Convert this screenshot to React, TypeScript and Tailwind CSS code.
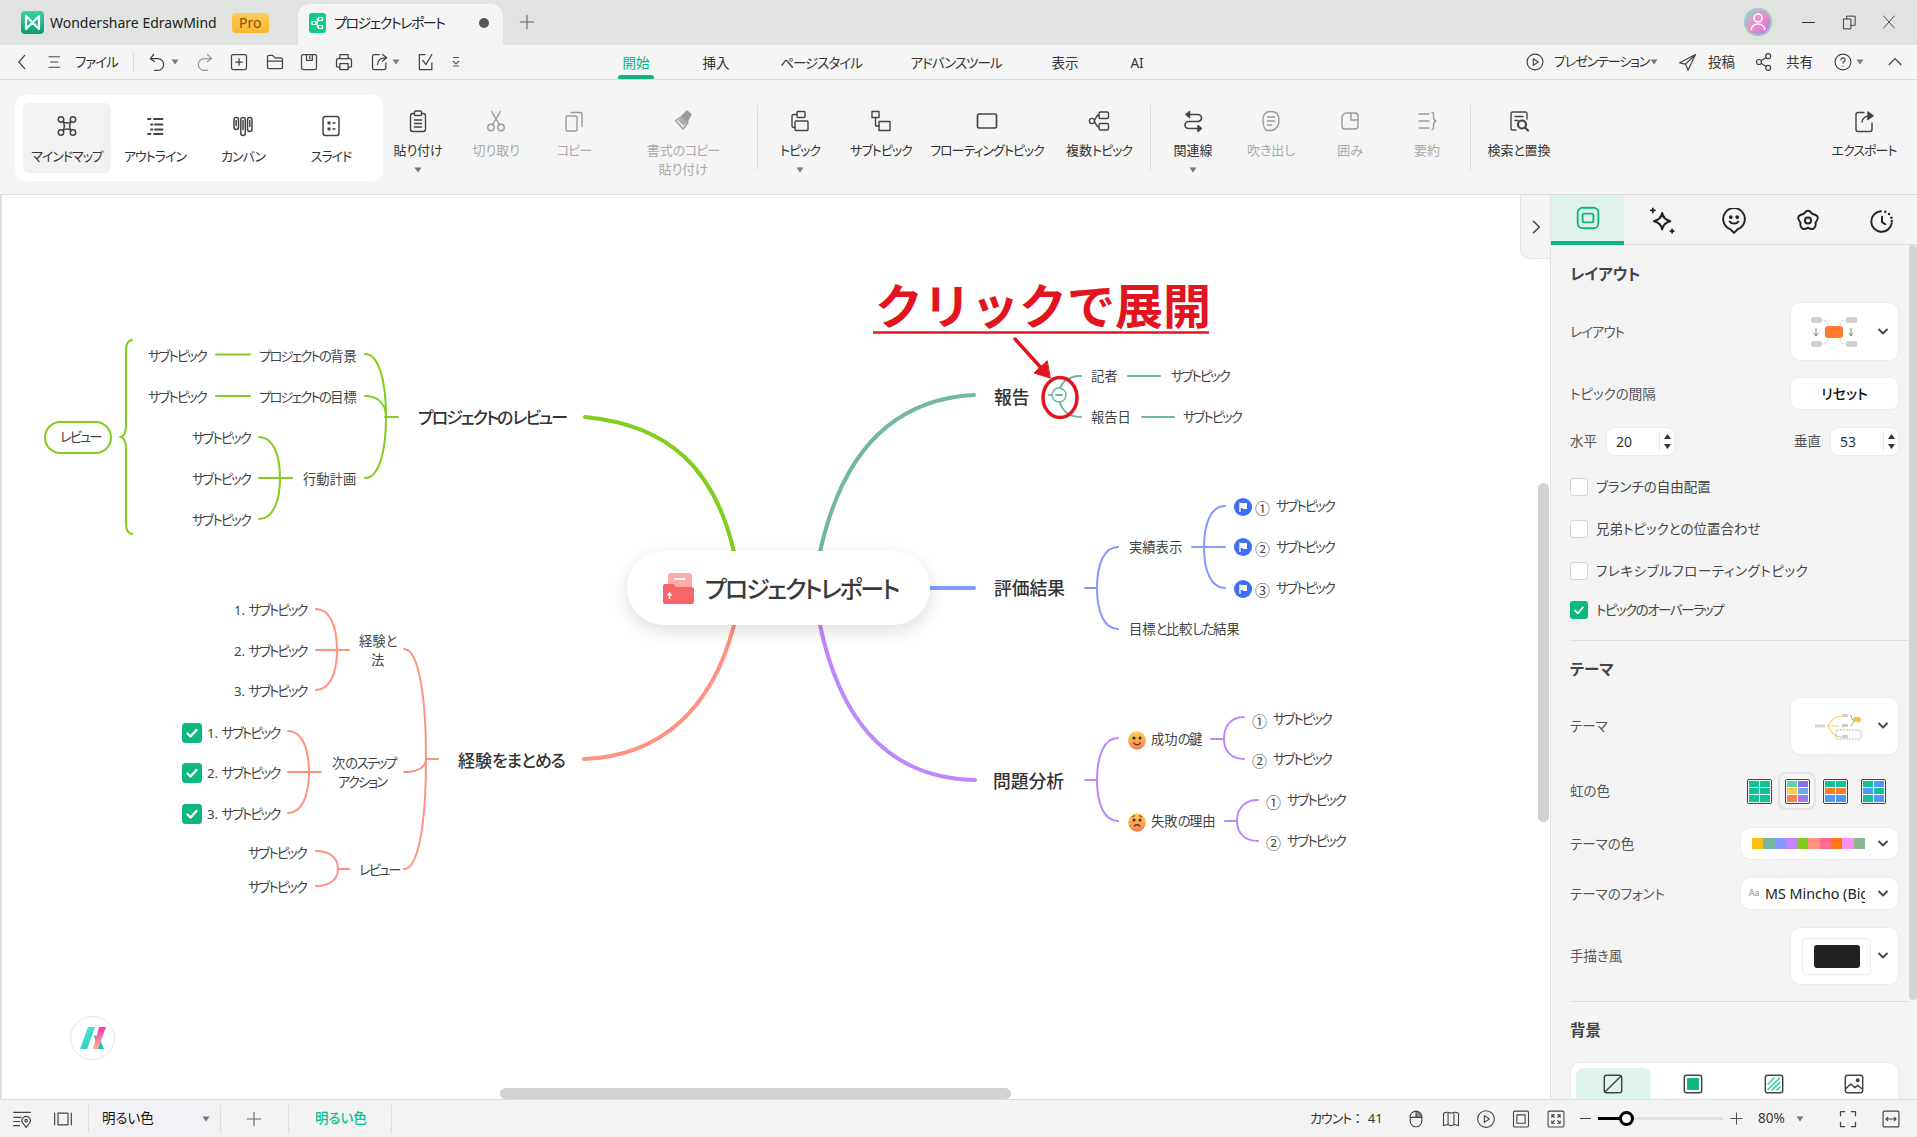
import React from "react";

const G = "#82cd1e", T = "#73b7a0", B = "#8598ff", C = "#ff9380", P = "#bf87fb", RED = "#e2141f";

const Sv = ({ s = 24, w = 1.5, children, className = "" }: { s?: number; w?: number; children: React.ReactNode; className?: string }) => (
  <svg width={s} height={s} viewBox="0 0 24 24" fill="none" stroke="currentColor" strokeWidth={w} strokeLinecap="round" strokeLinejoin="round" className={"shrink-0 " + className}>
    {children}
  </svg>
);

/* Narrows kana runs the way the reference's UI font does, leaving kanji at full width. */
const Kn = ({ t, a = "tracking-[-1px]", b = "tracking-[-0.3px]" }: { t: string; a?: string; b?: string }) => (
  <>
    {t.split(/([\u30A0-\u30FF]+|[\u3040-\u309F]+)/).filter(Boolean).map((p, i) => (
      <span key={i} className={/^[\u30A0-\u30FF]/.test(p) ? a : /^[\u3040-\u309F]/.test(p) ? b : ""}>{p}</span>
    ))}
  </>
);

const Caret = ({ className = "" }: { className?: string }) => (
  <svg width="8" height="6" viewBox="0 0 8 6" className={"shrink-0 " + className}><path d="M0.5 0.5h7L4 5.5z" fill="#777" /></svg>
);
const Chev = () => (
  <svg width="12" height="8" viewBox="0 0 12 8" fill="none" stroke="#444" strokeWidth="1.8" strokeLinecap="round" strokeLinejoin="round" className="shrink-0"><path d="M2 1.5l4 4 4-4" /></svg>
);

/* ribbon icons */
const icons: Record<string, React.ReactNode> = {
  mind: (<><circle cx="6" cy="5.5" r="2.7" /><circle cx="18" cy="5.5" r="2.7" /><circle cx="6" cy="18.5" r="2.7" /><circle cx="18" cy="18.5" r="2.7" /><path d="M8 7.5c2.5 2 5.5 2 8 0M8 16.5c2.5-2 5.5-2 8 0M8 7.5c1.8 3 1.8 6 0 9M16 7.5c-1.8 3-1.8 6 0 9" /></>),
  outline: (<path d="M5 5h2.500M11 5h8.500M8 10.500h1.500M12 10.500h7.500M8 15.500h1.500M12 15.500h7.500M5 20h2.500M11 20h8.500" strokeWidth="1.8" />),
  kanban: (<><rect x="3" y="3.500" width="4.500" height="12" rx="2.200" /><rect x="9.800" y="3.500" width="4.500" height="18" rx="2.200" /><rect x="16.500" y="3.500" width="4.500" height="14" rx="2.200" /><path d="M5.200 6.500v5M12 6.500v9M18.700 6.500v6" /></>),
  slide: (<><rect x="4" y="2.500" width="16" height="19" rx="2.500" /><rect x="8.500" y="7.500" width="3" height="3" fill="currentColor" stroke="none" /><rect x="8.500" y="13.500" width="3" height="3" fill="currentColor" stroke="none" /><path d="M14 9h2M14 15h2" /></>),
  paste: (<><rect x="4.500" y="4.500" width="15" height="18" rx="2.500" /><rect x="8.500" y="2" width="7" height="4.500" rx="1" fill="#f5f5f5" /><path d="M8.500 11h7M8.500 14.500h7M8.500 18h7" /></>),
  cut: (<><circle cx="7" cy="18.500" r="3.200" /><circle cx="17" cy="18.500" r="3.200" /><path d="M8.500 15.700L16.500 2.500M15.500 15.700L7.500 2.500" /></>),
  copy: (<><rect x="4" y="7" width="11" height="15" rx="1.500" /><path d="M9 3.500h9.500a1.500 1.500 0 0 1 1.500 1.500v12.500" /></>),
  brush: (<><path d="M4.500 11.500l7-4.500 5.500 6.500-5 6.500z" /><path d="M11 7l5-5 4 3.500-3.500 6.500z" fill="currentColor" /><path d="M11.500 7l5.500 6.500-5 3-5-5z" fill="currentColor" stroke="none" opacity=".8" /></>),
  topic: (<><rect x="9" y="2.500" width="8" height="6" rx="1" /><rect x="7" y="12" width="13" height="9.500" rx="1" /><path d="M9 5.500H6a2 2 0 0 0-2 2v9a2 2 0 0 0 2 2h1" /></>),
  sub: (<><rect x="3" y="2.500" width="7" height="6" /><rect x="10" y="12.500" width="11" height="9" /><path d="M6.500 8.500V17H10" /></>),
  float: (<rect x="2.500" y="5" width="19" height="14" rx="1.500" strokeWidth="1.700" />),
  multi: (<><circle cx="5" cy="12" r="2.600" /><rect x="12" y="3" width="9.500" height="6.500" rx="1.500" /><rect x="12" y="14.500" width="9.500" height="6.500" rx="1.500" /><path d="M7.500 11c1.500-1 1.500-5 4.500-5M7.500 13c1.500 1 1.500 5 4.500 5" /></>),
  relation: (<><path d="M6 5.500h11a3.500 3.500 0 0 1 0 7H7.500a3.500 3.500 0 0 0 0 7H19" strokeWidth="1.700" /><path d="M8.500 2.500L5 5.500l3.500 3zM17 16.500l3.500 3-3.500 3z" fill="currentColor" /></>),
  callout: (<><path d="M12 2.500c5.500 0 8 3.500 8 8.500s-2 9-7 10.500H8c-3-1.500-4-5-4-10.500S6.500 2.500 12 2.500z" /><path d="M8.500 8h7M8.500 12h7M8.500 16h4" /></>),
  boundary: (<><path d="M10 4H17a3 3 0 0 1 3 3v10a3 3 0 0 1-3 3H7a3 3 0 0 1-3-3V9a5 5 0 0 1 6-5z" /><path d="M13 4v7h7" /></>),
  summary: (<path d="M4 5h10M4 12h10M4 19h10M17 3.500c2 0 1.500 2 1.500 4s0 4 2.500 4.500c-2.500.500-2.500 2.500-2.500 4.500s.500 4-1.500 4" />),
  find: (<><path d="M20 10V4.500A1.500 1.500 0 0 0 18.500 3H5.500A1.500 1.500 0 0 0 4 4.500v15A1.500 1.500 0 0 0 5.500 21H9" /><path d="M8 7.500h8M8 11.500h3" /><circle cx="15" cy="15.500" r="4" strokeWidth="2.200" /><path d="M18 18.500l3 3" strokeWidth="2.200" /></>),
  exportI: (<><path d="M12 3.500H6A2 2 0 0 0 4 5.500v15A2 2 0 0 0 6 22.500h12a2 2 0 0 0 2-2V14" /><path d="M10 13c.5-4 3.500-6 8-6" /><path d="M16 3l5 3.800-5 3.700z" fill="currentColor" /></>),
};

const RibbonItem = ({ icon, label, w, dim, caret, label2 }: { icon: string; label: string; w: string; dim?: boolean; caret?: boolean; label2?: string }) => (
  <div className={"flex shrink-0 flex-col items-center pt-[29px] " + w + (dim ? " text-[#a9a9a9]" : " text-[#333]")}>
    <Sv s={24} w={1.4} className={dim ? "text-[#9a9a9a]" : "text-[#444]"}>{icons[icon]}</Sv>
    <div className="mt-[8px] h-[19px] whitespace-nowrap text-[13px] leading-[19px]"><Kn t={label} /></div>
    {label2 && <div className="h-[19px] whitespace-nowrap text-[13px] leading-[19px]"><Kn t={label2} /></div>}
    {caret && <Caret className="mt-[7px]" />}
  </div>
);

const ModeItem = ({ icon, label, active }: { icon: string; label: string; active?: boolean }) => (
  <div className={"flex h-[70px] w-[88px] flex-col items-center rounded-[6px] pt-[11px] text-[#333] " + (active ? "bg-[#f2f2f2]" : "")}>
    <Sv s={24} w={1.5} className="text-[#444]">{icons[icon]}</Sv>
    <div className="mt-[9px] whitespace-nowrap text-[13px] leading-[19px]"><Kn t={label} /></div>
  </div>
);

const VDiv = ({ className = "" }: { className?: string }) => <div className={"w-px shrink-0 bg-[#dedede] " + className} />;

const MenuTab = ({ label, w, ml, active }: { label: string; w: string; ml: string; active?: boolean }) => (
  <div className={"relative flex h-full shrink-0 items-center justify-center whitespace-nowrap pt-[2px] text-[13.5px] " + w + " " + ml + (active ? " text-[#0cb37f]" : " text-[#333]")}>
    <span><Kn t={label} /></span>
    {active && <div className="absolute bottom-0 left-0 right-0 h-[4px] rounded-t-[3px] bg-[#0cb37f]" />}
  </div>
);

/* mind map */
type N = { x: number; y: number; t: string; k?: "m" | "b" | "s" | "d" };
const sub = "サブトピック";
const nodes: N[] = [
  { x: 418, y: 417, t: "プロジェクトのレビュー", k: "b" },
  { x: 458, y: 760, t: "経験をまとめる", k: "b" },
  { x: 994, y: 398, t: "報告", k: "m" },
  { x: 994, y: 589, t: "評価結果", k: "m" },
  { x: 993, y: 782, t: "問題分析", k: "m" },
  { x: 148, y: 356, t: sub }, { x: 148, y: 397, t: sub },
  { x: 259, y: 356, t: "プロジェクトの背景" }, { x: 259, y: 397, t: "プロジェクトの目標" },
  { x: 192, y: 438, t: sub }, { x: 192, y: 479, t: sub }, { x: 192, y: 520, t: sub },
  { x: 303, y: 479, t: "行動計画" },
  { x: 60, y: 437, t: "レビュー" },
  { x: 234, y: 610, t: "1. " + sub }, { x: 234, y: 651, t: "2. " + sub }, { x: 234, y: 691, t: "3. " + sub },
  { x: 207, y: 733, t: "1. " + sub }, { x: 207, y: 773, t: "2. " + sub }, { x: 207, y: 814, t: "3. " + sub },
  { x: 248, y: 853, t: sub }, { x: 248, y: 887, t: sub },
  { x: 359, y: 641, t: "経験と" }, { x: 371, y: 660, t: "法" },
  { x: 332, y: 763, t: "次のステップ" }, { x: 338, y: 782, t: "アクション" },
  { x: 359, y: 870, t: "レビュー" },
  { x: 1091, y: 376, t: "記者" }, { x: 1171, y: 376, t: sub },
  { x: 1091, y: 417, t: "報告日" }, { x: 1183, y: 417, t: sub },
  { x: 1129, y: 547, t: "実績表示" }, { x: 1129, y: 629, t: "目標と比較した結果" },
  { x: 1276, y: 506, t: sub }, { x: 1276, y: 547, t: sub }, { x: 1276, y: 588, t: sub },
  { x: 1151, y: 739, t: "成功の鍵" }, { x: 1151, y: 821, t: "失敗の理由" },
  { x: 1273, y: 719, t: sub }, { x: 1273, y: 759, t: sub },
  { x: 1287, y: 800, t: sub }, { x: 1287, y: 841, t: sub },
  { x: 1255, y: 508, t: "①", k: "d" }, { x: 1255, y: 549, t: "②", k: "d" }, { x: 1255, y: 590, t: "③", k: "d" },
  { x: 1252, y: 721, t: "①", k: "d" }, { x: 1252, y: 761, t: "②", k: "d" },
  { x: 1266, y: 802, t: "①", k: "d" }, { x: 1266, y: 843, t: "②", k: "d" },
];
const TOP = 195;
const kindClass: Record<string, string> = {
  b: "text-[17px] font-medium text-[#333]",
  m: "text-[17.8px] font-medium text-[#333]",
  s: "mt-px text-[13.3px] text-[#444]",
  d: "text-[15px] text-[#444]",
};

const arc = (x1: number, y1: number, x2: number, y2: number) =>
  `M${x1} ${y1}C${x1 + (x2 - x1) * 0.62} ${y1} ${x2} ${y1 + (y2 - y1) * 0.38} ${x2} ${y2}`;

const thin: [string, string][] = [
  [G, "M385 417H398"], [G, arc(365, 354, 386, 417)], [G, arc(365, 396, 386, 417)], [G, arc(365, 478, 386, 417)],
  [G, "M216 354.500H250"], [G, "M216 396H250"],
  [G, "M259 478H292"], [G, arc(259, 437, 280, 478)], [G, arc(259, 519, 280, 478)],
  [G, "M132 340C127 341 126 345 126 352V425C126 432 124 436 121 437C124 438 126 442 126 449V522C126 529 127 533 132 534"],
  [C, "M426 759H438"], [C, arc(404, 649, 426, 759)], [C, arc(404, 772, 426, 759)], [C, arc(404, 869, 426, 759)],
  [C, "M316 650H349"], [C, arc(316, 609, 337, 650)], [C, arc(316, 690, 337, 650)],
  [C, "M288 772H321"], [C, arc(288, 731, 309, 772)], [C, arc(288, 813, 309, 772)],
  [C, "M339 869H349"], [C, arc(316, 851, 338, 869)], [C, arc(316, 886, 338, 869)],
  [T, arc(1081, 376, 1059, 395)], [T, arc(1081, 417, 1059, 395)], [T, "M1128 376H1160"], [T, "M1142 417H1174"],
  [B, "M1085 588H1097"], [B, arc(1118, 547, 1097, 588)], [B, arc(1118, 629, 1097, 588)],
  [B, "M1192 547H1225"], [B, arc(1225, 506, 1204, 547)], [B, arc(1225, 588, 1204, 547)],
  [P, "M1085 780H1097"], [P, arc(1118, 738, 1097, 780)], [P, arc(1118, 821, 1097, 780)],
  [P, "M1211 739H1224"], [P, arc(1244, 717, 1224, 739)], [P, arc(1244, 759, 1224, 739)],
  [P, "M1225 821H1237"], [P, arc(1258, 800, 1237, 821)], [P, arc(1258, 841, 1237, 821)],
];

const MapLines = () => (
  <svg className="absolute left-0 top-0" width="1550" height="904" viewBox={`0 ${TOP} 1550 904`} fill="none" strokeLinecap="round">
    <g strokeWidth="4">
      <path d="M734 552C715 470 670 425 585 417" stroke={G} />
      <path d="M820 552C838 470 880 400 974 395" stroke={T} />
      <path d="M925 588H974" stroke={B} />
      <path d="M734 625C712 710 660 756 584 759" stroke={C} />
      <path d="M820 625C838 710 880 778 975 780" stroke={P} />
    </g>
    <g strokeWidth="2">
      {thin.map(([c, d], i) => <path key={i} d={d} stroke={c} />)}
    </g>
    <rect x="45" y="422" width="66" height="31" rx="15.500" stroke={G} strokeWidth="2" fill="#fff" />
    <circle cx="1059" cy="395" r="7" fill="#fff" stroke={T} strokeWidth="1.500" />
    <path d="M1056 395H1062" stroke={T} strokeWidth="2" />
    <path d="M1049 395H1052" stroke={T} strokeWidth="2" />
    <ellipse cx="1060" cy="397.500" rx="17" ry="20" stroke={RED} strokeWidth="3.500" />
    <path d="M1015 339L1043 370" stroke={RED} strokeWidth="3.500" />
    <path d="M1050 378L1034 373L1047 361z" fill={RED} stroke={RED} strokeWidth="1" strokeLinejoin="round" />
    <path d="M873 332.500H1209" stroke={RED} strokeWidth="2.500" strokeLinecap="butt" />
  </svg>
);

const FlagDot = ({ y }: { y: number }) => (
  <svg className="absolute left-[1234px]" style={{ top: y - TOP - 9 }} width="18" height="18" viewBox="0 0 18 18">
    <circle cx="9" cy="9" r="9" fill="#3f6df5" />
    <path d="M6 4.500V14" stroke="#fff" strokeWidth="1.400" />
    <path d="M6 5h7v6H9.500L8.500 10H6z" fill="#fff" />
  </svg>
);
const Check = ({ y }: { y: number }) => (
  <svg className="absolute left-[182px]" style={{ top: y - TOP }} width="20" height="20" viewBox="0 0 20 20">
    <rect width="20" height="20" rx="3.500" fill="#0cb87f" />
    <path d="M5.500 10.500l3 3 6-6.500" fill="none" stroke="#fff" strokeWidth="2.400" strokeLinecap="round" strokeLinejoin="round" />
  </svg>
);
const Face = ({ y, sad, id }: { y: number; sad?: boolean; id: string }) => (
  <svg className="absolute left-[1128px]" style={{ top: y - TOP - 9 }} width="18" height="19" viewBox="0 0 18 19">
    <defs><linearGradient id={id} x1="0" y1="0" x2="0" y2="1"><stop offset="0" stopColor="#fdd24a" /><stop offset="1" stopColor="#fb7a55" /></linearGradient></defs>
    <ellipse cx="9" cy="9.500" rx="8.800" ry="9.300" fill={`url(#${id})`} />
    <circle cx="6" cy="7" r="1.500" fill="#3a2a20" /><circle cx="12" cy="7" r="1.500" fill="#3a2a20" />
    {sad
      ? (<><path d="M6 13.500c1.500-2.500 4.500-2.500 6 0" fill="none" stroke="#3a2a20" strokeWidth="1.100" /><path d="M4 4l3-1.500M14 4l-3-1.500" stroke="#a2482a" strokeWidth="1.100" /></>)
      : <path d="M5.500 11.500c1.500 3 5.500 3 7 0" fill="none" stroke="#3a2a20" strokeWidth="1.100" />}
  </svg>
);

const Canvas = () => (
  <div className="relative min-w-0 flex-1 overflow-hidden border-l-[2px] border-[#e0e0e0] bg-white">
    <div className="absolute -left-[2px] top-0 h-[904px] w-[1550px]">
      <MapLines />
      <div className="absolute left-[627px] top-[356px] flex h-[74px] w-[303px] items-center rounded-[37px] bg-white pl-[36px] shadow-[0_6px_18px_rgba(0,0,0,0.13)]">
        <svg width="32" height="31" viewBox="0 0 32 31" className="shrink-0">
          <rect x="5" y="0" width="24" height="17" rx="2.500" fill="#ffa9a9" />
          <path d="M11 6h11" stroke="#fff" strokeWidth="1.800" />
          <path d="M1.500 11h9l3 3H29a2 2 0 0 1 2 2v13a2 2 0 0 1-2 2H2a2 2 0 0 1-2-2V13a2 2 0 0 1 1.500-2z" fill="#f6656a" />
          <path d="M6.500 26v-5M4.500 22.500l2-2.500 2 2.500" stroke="#fff" strokeWidth="1.600" fill="none" />
        </svg>
        <span className="ml-[10px] whitespace-nowrap pt-[2px] text-[24px] font-medium text-[#3a3a3a]"><Kn t="プロジェクトレポート" a="tracking-[-2.2px]" /></span>
      </div>
      {nodes.map((n, i) => (
        <div key={i} className={"absolute -translate-y-1/2 whitespace-nowrap leading-none " + kindClass[n.k || "s"]} style={{ left: n.x, top: n.y - TOP }}>
          {n.k === "b"
            ? <Kn t={n.t} a="tracking-[-2px]" b="tracking-[-1.2px]" />
            : <Kn t={n.t} a="tracking-[-1.9px]" b="tracking-[-1.5px]" />}
        </div>
      ))}
      <div className="absolute left-[875px] top-[81px] whitespace-nowrap text-[48px] font-bold leading-[60px] text-[#e2141f] [font-feature-settings:normal]">クリックで展開</div>
      <FlagDot y={507} /><FlagDot y={547} /><FlagDot y={589} />
      <Check y={723} /><Check y={763} /><Check y={804} />
      <Face y={740} id="fa" /><Face y={822} sad id="fb" />
      <div className="absolute left-[70px] top-[821px] flex h-[44px] w-[45px] items-center justify-center rounded-full border border-[#e6e6e6] bg-white">
        <svg width="26" height="22" viewBox="0 0 26 22">
          <defs>
            <linearGradient id="lg1" x1="0" y1="0" x2="1" y2="1"><stop offset="0" stopColor="#6fe7f6" /><stop offset="1" stopColor="#08c9a7" /></linearGradient>
            <linearGradient id="lg2" x1="0" y1="0" x2="0" y2="1"><stop offset="0" stopColor="#f03ab6" /><stop offset="1" stopColor="#ffb38a" /></linearGradient>
          </defs>
          <path d="M8 0h7L7 22H0z" fill="url(#lg1)" />
          <path d="M14 8l3 14h7l-5-12z" fill="#17c9b5" />
          <path d="M19 0h7l-8 22h-5z" fill="url(#lg2)" />
        </svg>
      </div>
      <div className="absolute bottom-0 left-[500px] h-[11px] w-[511px] rounded-full bg-[#d2d2d4]" />
      <div className="absolute left-[1538px] top-[288px] h-[339px] w-[11px] rounded-full bg-[#d2d2d4]" />
      <div className="absolute right-0 top-0 flex h-[64px] w-[30px] items-center justify-center rounded-bl-[10px] border-b border-l border-[#e4e4e4] bg-[#f5f5f5] text-[#444]">
        <Sv s={20} w={1.7}><path d="M9 5l7 7-7 7" /></Sv>
      </div>
    </div>
  </div>
);

/* panel */
const Row = ({ label, h, mt, children, track = "" }: { label: string; h: string; mt: string; children: React.ReactNode; track?: string }) => (
  <div className={"flex items-center justify-between " + h + " " + mt}>
    <span className={"whitespace-nowrap pt-[1px] text-[13.5px] text-[#555] " + track}>{label}</span>
    {children}
  </div>
);
const Heading = ({ t, mt }: { t: string; mt: string }) => (
  <div className={"flex h-[24px] items-center whitespace-nowrap pt-[2px] text-[15.5px] font-bold text-[#444] " + mt}>{t}</div>
);
const CheckRow = ({ t, on, mt, track = "" }: { t: string; on?: boolean; mt: string; track?: string }) => (
  <div className={"flex h-[22px] items-center " + mt}>
    {on
      ? (<svg width="18" height="18" viewBox="0 0 18 18" className="shrink-0"><rect width="18" height="18" rx="3" fill="#0cb87f" /><path d="M5 9.500l2.800 2.800 5-5.800" fill="none" stroke="#fff" strokeWidth="1.800" strokeLinecap="round" strokeLinejoin="round" /></svg>)
      : <div className="h-[18px] w-[18px] shrink-0 rounded-[3px] border border-[#d4d4d4] bg-white" />}
    <span className={"ml-[8px] whitespace-nowrap text-[13.5px] text-[#444] " + track}>{t}</span>
  </div>
);
const Spin = ({ label, v }: { label: string; v: string }) => (
  <div className="flex items-center">
    <span className="w-[36px] text-[13.5px] text-[#555]">{label}</span>
    <div className="flex h-[29px] w-[69px] items-center rounded-[8px] border border-[#ebebeb] bg-white pl-[9px]">
      <span className="w-[43px] text-[14px] text-[#333]">{v}</span>
      <div className="h-[20px] w-px bg-[#e8e8e8]" />
      <div className="ml-[4px] flex flex-col gap-[5px]">
        <svg width="7" height="5" viewBox="0 0 7 5"><path d="M0 5h7L3.500 0z" fill="#333" /></svg>
        <svg width="7" height="5" viewBox="0 0 7 5"><path d="M0 0h7L3.500 5z" fill="#333" /></svg>
      </div>
    </div>
  </div>
);
const Card = ({ children, w = "w-[109px]", h = "h-[59px]", pad = "pr-[9px]" }: { children: React.ReactNode; w?: string; h?: string; pad?: string }) => (
  <div className={"flex items-center justify-between rounded-[10px] border border-[#ebebeb] bg-white " + w + " " + h + " " + pad}>{children}</div>
);

const TableSwatch = ({ cells, sel }: { cells: string[]; sel?: boolean }) => (
  <div className={"flex h-[38px] w-[38px] items-center justify-center rounded-[8px] " + (sel ? "border-[2px] border-[#e3e3e3]" : "")}>
    <div className="grid h-[25px] w-[25px] grid-cols-2 gap-[1px] rounded-[2px] border-[1.500px] border-[#444] bg-[#fff] p-[1px]">
      {cells.map((c, i) => <div key={i} style={{ background: c }} />)}
    </div>
  </div>
);
const themeColors = ["#fcbf0f", "#73b7a0", "#8598ff", "#bf87fb", "#7fcc1e", "#ff9380", "#ff6a93", "#ff7612", "#ff8ff5", "#8db58e"];

const Panel = () => (
  <div className="relative flex w-[367px] shrink-0 flex-col overflow-hidden border-l border-[#e4e4e4] bg-[#f4f4f4]">
    <div className="flex h-[50px] shrink-0 items-center border-b border-[#dedede] text-[#222]">
      <div className="flex h-[50px] w-[74px] items-center justify-center border-b-[4px] border-[#0cb87f] bg-[#dff1ea] text-[#0cb87f]">
        <Sv s={26} w={1.700}><rect x="2.500" y="2.500" width="19" height="19" rx="4.500" /><rect x="7" y="8" width="10" height="8" rx="1.500" /></Sv>
      </div>
      <div className="flex w-[74px] justify-center">
        <Sv s={28} w={1.800}><path d="M13 6c.8 4 2.500 6 7 7-4.500 1-6.200 3-7 7-.8-4-2.500-6-7-7 4.500-1 6.200-3 7-7z" /><path d="M5 2v3.500M3.200 3.700h3.600M21.500 20v3M20 21.500h3" strokeWidth="1.500" /></Sv>
      </div>
      <div className="flex w-[74px] justify-center pt-[2px]">
        <Sv s={26} w={1.800}><path d="M12 23l-3.500-3.500A10 10 0 1 1 15.500 19.500z" /><path d="M8 12.500c1.500 2.500 6.500 2.500 8 0" /><circle cx="9" cy="8.500" r=".8" fill="currentColor" /><circle cx="15" cy="8.500" r=".8" fill="currentColor" /></Sv>
      </div>
      <div className="flex w-[74px] justify-center pl-[2px] pt-[2px]">
        <Sv s={26} w={1.800}><path d="M12 2.500c2 0 3 1.500 4 3 2 .3 4.500 1 5 3 .5 2-1 3.500-2 5 .2 2-.2 4.500-2 5.500s-3.500 0-5-.8c-1.500.8-3.200 1.800-5 .8s-2.200-3.500-2-5.500c-1-1.500-2.500-3-2-5 .5-2 3-2.700 5-3 1-1.500 2-3 4-3z" /><circle cx="12" cy="11.500" r="2.800" /></Sv>
      </div>
      <div className="flex w-[74px] justify-center pl-[4px] pt-[2px]">
        <Sv s={26} w={1.800}><path d="M11 3a9.500 9.500 0 1 0 10 11" /><path d="M12 8v5l3 2" /><path d="M15 3.500h.01M18.500 5.500h.01M20.700 9h.01M21 12h.01" strokeWidth="2.200" /></Sv>
      </div>
    </div>
    <div className="pl-[19px] pr-[18px]">
      <Heading t="レイアウト" mt="mt-[17px]" />
      <Row label="レイアウト" h="h-[59px]" mt="mt-[16px]" track="tracking-[-1px]">
        <Card pad="pr-[9px] pl-[20px]">
          <svg width="46" height="30" viewBox="0 0 46 30" className="shrink-0">
            <g fill="#cfcfcf"><rect y="0" width="11" height="6" rx="2" /><rect x="35" y="0" width="11" height="6" rx="2" /><rect y="24" width="11" height="6" rx="2" /><rect x="35" y="24" width="11" height="6" rx="2" /></g>
            <path d="M11 3c5 0 6 3 6 6M35 3c-5 0-6 3-6 6M11 27c5 0 6-3 6-6M35 27c-5 0-6-3-6-6" stroke="#d8d8d8" fill="none" />
            <rect x="14" y="9" width="18" height="12" rx="3" fill="#ff7a2e" />
            <path d="M5 11v8M40 11v8M3 16l2 3 2-3M38 16l2 3 2-3" stroke="#888" fill="none" />
          </svg>
          <Chev />
        </Card>
      </Row>
      <Row label="トピックの間隔" h="h-[33px]" mt="mt-[16px]">
        <div className="flex h-[33px] w-[109px] items-center justify-center rounded-[8px] border border-[#ebebeb] bg-white text-[14px] font-medium text-[#111]">リセット</div>
      </Row>
      <div className="mt-[17px] flex h-[29px] items-center justify-between">
        <Spin label="水平" v="20" />
        <Spin label="垂直" v="53" />
      </div>
      <CheckRow t="ブランチの自由配置" mt="mt-[20px]" />
      <CheckRow t="兄弟トピックとの位置合わせ" mt="mt-[20px]" />
      <CheckRow t="フレキシブルフローティングトピック" mt="mt-[20px]" track="tracking-[0.6px]" />
      <CheckRow t="トピックのオーバーラップ" on mt="mt-[17px]" track="tracking-[-1.5px]" />
      <div className="-mr-[10px] mt-[19px] h-px bg-[#dedede]" />
      <Heading t="テーマ" mt="mt-[16px]" />
      <Row label="テーマ" h="h-[58px]" mt="mt-[16px]">
        <Card h="h-[58px]" pad="pr-[9px] pl-[24px]">
          <svg width="48" height="28" viewBox="0 0 48 28" className="shrink-0" fill="none">
            <path d="M12 14h12M12 14c4-1 3-10 16-10M12 14c4 1 3 11 16 11" stroke="#fcd27c" strokeWidth="1.200" />
            <rect x="0" y="12.500" width="10" height="3" fill="#d5d5d5" />
            <rect x="27" y="2" width="6" height="3" fill="#ccc" /><rect x="27" y="12" width="6" height="3" fill="#ccc" /><rect x="27" y="23" width="6" height="3" fill="#ccc" />
            <path d="M35 3c2 0 1 5 3 5s-1 6-3 6" stroke="#999" />
            <rect x="38" y="5" width="8" height="5" rx="2.500" fill="#fcbf3a" />
            <rect x="21" y="18" width="25" height="9" rx="1" stroke="#bbb" strokeDasharray="2 1" />
          </svg>
          <Chev />
        </Card>
      </Row>
      <Row label="虹の色" h="h-[38px]" mt="mt-[17px]">
        <div className="mr-[7px] flex">
          <TableSwatch cells={["#0ec39a", "#0ec39a", "#0ec39a", "#0ec39a", "#0ec39a", "#0ec39a"]} />
          <TableSwatch sel cells={["#5dd5a6", "#8a6fe8", "#ffc944", "#6aa9f2", "#ff8040", "#9a7cf0"]} />
          <TableSwatch cells={["#0ec39a", "#0ec39a", "#ff7d24", "#ff7d24", "#4f97fb", "#4f97fb"]} />
          <TableSwatch cells={["#0ec39a", "#4f97fb", "#4f97fb", "#0ec39a", "#0ec39a", "#4f97fb"]} />
        </div>
      </Row>
      <Row label="テーマの色" h="h-[33px]" mt="mt-[17px]">
        <Card w="w-[159px]" h="h-[33px]" pad="pr-[9px] pl-[11px]">
          <div className="flex">
            {themeColors.map((c) => <div key={c} className="h-[11px] w-[11.300px]" style={{ background: c }} />)}
          </div>
          <Chev />
        </Card>
      </Row>
      <Row label="テーマのフォント" h="h-[33px]" mt="mt-[17px]">
        <Card w="w-[159px]" h="h-[33px]" pad="pr-[9px] pl-[8px]">
          <div className="flex items-center">
            <span className="w-[16px] shrink-0 text-[8.500px] text-[#888]">Aa</span>
            <span className="w-[100px] overflow-hidden whitespace-nowrap text-[14.3px] text-[#222]">MS Mincho (Big</span>
          </div>
          <Chev />
        </Card>
      </Row>
      <Row label="手描き風" h="h-[58px]" mt="mt-[17px]">
        <Card h="h-[58px]" pad="pr-[9px] pl-[11px]">
          <div className="flex h-[37px] w-[69px] shrink-0 items-center justify-center rounded-[4px] border border-[#ececec]">
            <div className="h-[23px] w-[46px] rounded-[3px] bg-[#222]" />
          </div>
          <Chev />
        </Card>
      </Row>
      <div className="-mr-[10px] mt-[16px] h-px bg-[#dedede]" />
      <Heading t="背景" mt="mt-[16px]" />
      <div className="mt-[20px] flex h-[70px] items-start rounded-t-[10px] border border-[#ebebeb] bg-white px-[5px] pt-[5px] text-[#444]">
        <div className="flex h-[65px] w-[76px] justify-center rounded-t-[8px] bg-[#dff4ed] pt-[5px]">
          <Sv s={22} w={1.600}><rect x="2.500" y="2.500" width="19" height="19" rx="2.500" /><path d="M4 20L20 4" /></Sv>
        </div>
        <div className="ml-[3px] flex w-[80px] justify-center pt-[5px]">
          <Sv s={22} w={1.600}><rect x="2.500" y="2.500" width="19" height="19" rx="2.500" /><rect x="5.500" y="5.500" width="13" height="13" fill="#0cb87f" stroke="none" /></Sv>
        </div>
        <div className="ml-[2px] flex w-[80px] justify-center pt-[5px]">
          <Sv s={22} w={1.600}><rect x="2.500" y="2.500" width="19" height="19" rx="2.500" /><path d="M5.500 12L12 5.500M5.500 18L18 5.500M10 18.500l8-8M15.500 18.500l3-3" stroke="#3fcf9f" strokeWidth="1.800" /></Sv>
        </div>
        <div className="ml-[1px] flex w-[80px] justify-center pt-[5px]">
          <Sv s={22} w={1.600}><rect x="2.500" y="2.500" width="19" height="19" rx="2.500" /><path d="M3 17l5.500-5 4.500 4 3-2.500 5 4" /><circle cx="16" cy="8" r="1.400" fill="currentColor" /></Sv>
        </div>
      </div>
    </div>
    <div className="absolute right-0 top-[50px] h-[755px] w-[8px] rounded-[4px] bg-[#d2d2d4]" />
  </div>
);

const Tool = ({ ml = "", children, w = "w-[22px]" }: { ml?: string; children: React.ReactNode; w?: string }) => (
  <div className={"flex shrink-0 justify-center text-[#444] " + w + " " + ml}>{children}</div>
);

export default function App() {
  return (
    <div className="flex h-[1137px] w-[1917px] flex-col overflow-hidden bg-[#f5f5f5] font-['Noto_Sans','Noto_Sans_CJK_JP',sans-serif] [font-feature-settings:'palt'] text-[#333]">
      {/* title bar */}
      <div className="flex h-[45px] shrink-0 items-end bg-[#e1e3e1]">
        <div className="flex h-[41px] w-[298px] shrink-0 items-center pb-[4px] pl-[21px]">
          <svg width="23" height="23" viewBox="0 0 23 23" className="shrink-0">
            <defs><linearGradient id="ap" x1="0" y1="0" x2="0" y2="1"><stop offset="0" stopColor="#2fd6a0" /><stop offset="1" stopColor="#0e9b74" /></linearGradient></defs>
            <rect width="23" height="23" rx="4" fill="url(#ap)" />
            <path d="M5 18V5l6.500 6.500L18 5v13l-6.500-6.500z" fill="none" stroke="#fff" strokeWidth="2.200" strokeLinejoin="round" />
          </svg>
          <span className="ml-[6px] whitespace-nowrap text-[14px] text-[#222]">Wondershare EdrawMind</span>
          <span className="ml-[15px] flex h-[20px] w-[37px] items-center justify-center rounded-[4px] bg-gradient-to-b from-[#fdcb57] to-[#f9b52e] text-[14px] text-[#8a5200]">Pro</span>
        </div>
        <div className="flex h-[41px] w-[205px] shrink-0 items-center rounded-t-[12px] bg-[#f5f5f5] pb-[4px] pl-[11px]">
          <svg width="17" height="20" viewBox="0 0 17 20" className="shrink-0">
            <rect width="17" height="20" rx="3" fill="#0fcb90" />
            <g fill="none" stroke="#fff" strokeWidth="1.100"><rect x="9.500" y="4.500" width="4" height="3" /><rect x="9.500" y="12.500" width="4" height="3" /><rect x="3" y="8.500" width="4" height="3" /><path d="M7 10h1.200V6h1.300M8.200 10v4h1.300" /></g>
          </svg>
          <span className="ml-[8px] whitespace-nowrap text-[14px] text-[#222]"><Kn t="プロジェクトレポート" a="tracking-[-1.5px]" /></span>
          <div className="ml-auto mr-[14px] h-[10px] w-[10px] rounded-full bg-[#555]" />
        </div>
        <div className="mb-[14px] ml-[15px] text-[#666]">
          <Sv s={18} w={1.500}><path d="M12 3v18M3 12h18" /></Sv>
        </div>
        <div className="mb-[5px] ml-auto flex items-center">
          <svg width="28" height="36" viewBox="0 0 28 36" className="shrink-0">
            <defs><linearGradient id="av" x1="0" y1="0" x2="1" y2="1"><stop offset="0" stopColor="#8ad9d6" /><stop offset=".5" stopColor="#f78bc5" /><stop offset="1" stopColor="#b26cf0" /></linearGradient></defs>
            <circle cx="14" cy="18" r="14" fill="url(#av)" />
            <circle cx="14" cy="18" r="13" fill="none" stroke="#7fe0bf" strokeWidth="1.500" />
            <circle cx="14" cy="14" r="4" fill="none" stroke="#fff" strokeWidth="1.500" />
            <path d="M7 26c1-5 4-6 7-6s6 1 7 6" fill="none" stroke="#fff" strokeWidth="1.500" />
          </svg>
          <div className="ml-[30px] h-px w-[13px] bg-[#333]" />
          <div className="ml-[26px] text-[#333]"><Sv s={17} w={1.300}><path d="M4 7h10v14H4zM8 7V3h12v13h-6" /></Sv></div>
          <div className="ml-[23px] mr-[20px] text-[#333]"><Sv s={16} w={1.300}><path d="M4 3l16 18M20 3L4 21" /></Sv></div>
        </div>
      </div>

      {/* menu row */}
      <div className="flex h-[35px] shrink-0 items-center border-b border-[#dcdcdc] pl-[12px]">
        <Tool><Sv s={20} w={1.500}><path d="M14 4l-7 8 7 8" /></Sv></Tool>
        <Tool ml="ml-[10px]"><Sv s={18} w={1.500}><path d="M4 5h14M6 12h10M4 19h14" /></Sv></Tool>
        <span className="ml-[9px] mt-px w-[41px] whitespace-nowrap text-[13.5px]"><Kn t="ファイル" /></span>
        <VDiv className="ml-[17px] h-[20px]" />
        <Tool ml="ml-[12px]"><Sv s={20} w={1.500}><path d="M8 3L4 8l5 3.500M4.500 8H13a7 7 0 0 1 0 14H9" /></Sv></Tool>
        <Caret className="ml-[3px]" />
        <Tool ml="ml-[15px]"><Sv s={20} w={1.500} className="text-[#999]"><path d="M15 3l5 5-5 3.500M19.500 8H11a7 7 0 0 0 0 14h4" /></Sv></Tool>
        <Tool ml="ml-[12px]"><Sv s={20} w={1.500}><rect x="3" y="3" width="18" height="18" rx="2" /><path d="M12 8v8M8 12h8" /></Sv></Tool>
        <Tool ml="ml-[14px]"><Sv s={20} w={1.500}><path d="M3 6a2 2 0 0 1 2-2h4l3 3h7a2 2 0 0 1 2 2v9a2 2 0 0 1-2 2H5a2 2 0 0 1-2-2zM3 11h18" /></Sv></Tool>
        <Tool ml="ml-[12px]"><Sv s={20} w={1.500}><rect x="3" y="3" width="18" height="18" rx="2" /><path d="M9 3v7h7V3M13 5v3" /></Sv></Tool>
        <Tool ml="ml-[13px]"><Sv s={20} w={1.500}><path d="M7 8V3h10v5M7 18H4a1 1 0 0 1-1-1v-7a2 2 0 0 1 2-2h14a2 2 0 0 1 2 2v7a1 1 0 0 1-1 1h-3" /><rect x="7" y="14" width="10" height="7" /></Sv></Tool>
        <Tool ml="ml-[14px]"><Sv s={20} w={1.500}><path d="M11 3H5a2 2 0 0 0-2 2v14a2 2 0 0 0 2 2h12a2 2 0 0 0 2-2v-6" /><path d="M9 15c.5-5 4-8 9-8M15 3l5 4-5 4" /></Sv></Tool>
        <Caret className="ml-[1px]" />
        <Tool ml="ml-[15px]"><Sv s={20} w={1.500}><path d="M11 3H4v18h15v-8" /><path d="M8 10l4 5 7-12" /></Sv></Tool>
        <Tool ml="ml-[13px]" w="w-[12px]"><svg width="10" height="12" viewBox="0 0 10 12" fill="none" stroke="#555" strokeWidth="1.200"><path d="M2 1.500h6M2 5l3 3 3-3M2 10l3 0 3 0" /></svg></Tool>
        <MenuTab label="開始" w="w-[36px]" ml="ml-[156px]" active />
        <MenuTab label="挿入" w="w-[36px]" ml="ml-[44px]" />
        <MenuTab label="ページスタイル" w="w-[80px]" ml="ml-[47px]" />
        <MenuTab label="アドバンスツール" w="w-[90px]" ml="ml-[50px]" />
        <MenuTab label="表示" w="w-[32px]" ml="ml-[48px]" />
        <MenuTab label="AI" w="w-[20px]" ml="ml-[46px]" />
        <div className="ml-auto flex items-center pr-[12px]">
          <Tool w="w-[20px]"><Sv s={20} w={1.400}><circle cx="12" cy="12" r="9.500" /><path d="M10 8l6 4-6 4z" /></Sv></Tool>
          <span className="ml-[9px] w-[92px] whitespace-nowrap text-[13px]"><Kn t="プレゼンテーション" a="tracking-[-1.1px]" /></span>
          <Caret className="ml-[4px]" />
          <Tool w="w-[20px]" ml="ml-[20px]"><Sv s={20} w={1.400}><path d="M21 3L2 13l7 1.500L12 22zM9 14.500L21 3" /></Sv></Tool>
          <span className="ml-[10px] w-[28px] whitespace-nowrap text-[13.5px]">投稿</span>
          <Tool w="w-[20px]" ml="ml-[18px]"><Sv s={20} w={1.400}><circle cx="6" cy="12" r="3" /><circle cx="17" cy="5" r="3" /><circle cx="17" cy="19" r="3" /><path d="M8.500 10.500L14.500 6.500M8.500 13.500l6 4" /></Sv></Tool>
          <span className="ml-[12px] w-[26px] whitespace-nowrap text-[13.5px]">共有</span>
          <Tool w="w-[20px]" ml="ml-[21px]"><Sv s={20} w={1.400}><circle cx="12" cy="12" r="9.500" /><path d="M9.500 9.500a2.500 2.500 0 1 1 3.500 2.300c-.7.400-1 .8-1 1.700M12 17h.01" /></Sv></Tool>
          <Caret className="ml-[3px]" />
          <Tool w="w-[20px]" ml="ml-[21px]"><Sv s={20} w={1.500}><path d="M5 15l7-7 7 7" /></Sv></Tool>
        </div>
      </div>

      {/* ribbon */}
      <div className="flex h-[115px] shrink-0 border-b border-[#dcdcdc] pl-[15px]">
        <div className="mt-[15px] flex h-[86px] w-[368px] shrink-0 items-center rounded-[10px] bg-white px-[8px]">
          <ModeItem icon="mind" label="マインドマップ" active />
          <ModeItem icon="outline" label="アウトライン" />
          <ModeItem icon="kanban" label="カンバン" />
          <ModeItem icon="slide" label="スライド" />
        </div>
        <RibbonItem icon="paste" label="貼り付け" w="w-[70px]" caret />
        <RibbonItem icon="cut" label="切り取り" w="w-[78px] ml-[4px]" dim />
        <RibbonItem icon="copy" label="コピー" w="w-[78px]" dim />
        <RibbonItem icon="brush" label="書式のコピー" label2="貼り付け" w="w-[140px]" dim />
        <VDiv className="ml-[4px] mt-[25px] h-[65px]" />
        <RibbonItem icon="topic" label="トピック" w="w-[84px]" caret />
        <RibbonItem icon="sub" label="サブトピック" w="w-[78px]" />
        <RibbonItem icon="float" label="フローティングトピック" w="w-[134px]" />
        <RibbonItem icon="multi" label="複数トピック" w="w-[90px]" />
        <VDiv className="ml-[6px] mt-[25px] h-[65px]" />
        <RibbonItem icon="relation" label="関連線" w="w-[84px]" caret />
        <RibbonItem icon="callout" label="吹き出し" w="w-[72px]" dim />
        <RibbonItem icon="boundary" label="囲み" w="w-[86px]" dim />
        <RibbonItem icon="summary" label="要約" w="w-[68px]" dim />
        <VDiv className="ml-[9px] mt-[25px] h-[65px]" />
        <RibbonItem icon="find" label="検索と置換" w="w-[96px]" />
        <RibbonItem icon="exportI" label="エクスポート" w="w-[106px] ml-auto" />
      </div>

      {/* main */}
      <div className="flex h-[904px] shrink-0">
        <Canvas />
        <Panel />
      </div>

      {/* status bar */}
      <div className="flex h-[38px] shrink-0 items-center border-t border-[#dcdcdc] bg-[#f3f3f3] pl-[12px]">
        <Tool w="w-[20px]"><Sv s={20} w={1.400}><path d="M2 4h20M2 10h9M2 15h7M2 20h7" /><path d="M17 22l-4-5a5 5 0 1 1 8 0z" /><circle cx="17" cy="14" r="1.500" /></Sv></Tool>
        <Tool w="w-[20px]" ml="ml-[21px]"><Sv s={20} w={1.400}><rect x="6" y="5" width="12" height="14" /><path d="M2 5v14M22 5v14" /></Sv></Tool>
        <VDiv className="ml-[15px] h-[28px]" />
        <div className="ml-[3px] flex h-[32px] w-[124px] items-center justify-between rounded-[6px] bg-[#f2f2f6] pl-[10px] pr-[6px] text-[13.5px] text-[#111]">
          明るい色
          <Caret />
        </div>
        <VDiv className="ml-[4px] h-[28px]" />
        <Tool w="w-[18px]" ml="ml-[24px]"><Sv s={18} w={1.500} className="text-[#666]"><path d="M12 3v18M3 12h18" /></Sv></Tool>
        <VDiv className="ml-[25px] h-[28px]" />
        <span className="ml-[26px] w-[53px] whitespace-nowrap text-[13.5px] font-medium text-[#0cc08a]">明るい色</span>
        <VDiv className="ml-[23px] h-[28px]" />
        <div className="ml-auto flex items-center pr-[16px] text-[#333]">
          <span className="w-[78px] whitespace-nowrap text-[13px]"><Kn t="カウント" /><span className="[font-feature-settings:normal]">：</span> 41</span>
          <Tool w="w-[20px]" ml="ml-[18px]"><Sv s={20} w={1.300}><rect x="5" y="2.500" width="14" height="19" rx="7" /><path d="M5 10h14M12 3v7" /><path d="M12 2.500h0a7 7 0 0 1 7 7v.500h-7z" fill="currentColor" opacity=".6" stroke="none" /></Sv></Tool>
          <Tool w="w-[20px]" ml="ml-[15px]"><Sv s={20} w={1.300}><path d="M3 5c3-1.500 6-1.500 9 0 3-1.500 6-1.500 9 0v15c-3-1.500-6-1.500-9 0-3-1.500-6-1.500-9 0zM8.500 4.500V19M15.500 4.500V19" /></Sv></Tool>
          <Tool w="w-[20px]" ml="ml-[15px]"><Sv s={20} w={1.300}><circle cx="12" cy="12" r="10" /><path d="M10 8l6 4-6 4z" /></Sv></Tool>
          <Tool w="w-[20px]" ml="ml-[15px]"><Sv s={20} w={1.300}><rect x="3" y="2.500" width="18" height="19" rx="1.500" /><rect x="7" y="7" width="10" height="10" /></Sv></Tool>
          <Tool w="w-[20px]" ml="ml-[15px]"><Sv s={20} w={1.300}><rect x="2.500" y="2.500" width="19" height="19" rx="1.500" /><path d="M7 7l3 3M7 7h3M7 7v3M17 7l-3 3M17 7h-3M17 7v3M7 17l3-3M7 17h3M7 17v-3M17 17l-3-3M17 17h-3M17 17v-3" /></Sv></Tool>
          <div className="ml-[14px] h-px w-[11px] bg-[#444]" />
          <div className="relative ml-[7px] h-[3px] w-[125px] rounded-full bg-[#e0e0e0]">
            <div className="h-[3px] w-[28px] bg-black" />
            <div className="absolute left-[21px] top-[-6px] h-[15px] w-[15px] rounded-full border-[3px] border-black bg-white" />
          </div>
          <Tool w="w-[14px]" ml="ml-[6px]"><Sv s={15} w={1.500}><path d="M12 3v18M3 12h18" /></Sv></Tool>
          <span className="ml-[15px] w-[28px] whitespace-nowrap text-[13.5px]">80%</span>
          <Caret className="ml-[10px]" />
          <Tool w="w-[20px]" ml="ml-[34px]"><Sv s={20} w={1.500}><path d="M3 8V3h5M16 3h5v5M21 16v5h-5M8 21H3v-5" /></Sv></Tool>
          <Tool w="w-[20px]" ml="ml-[23px]"><Sv s={20} w={1.400}><rect x="2.500" y="2.500" width="19" height="19" rx="1.500" /><path d="M6 12h12M8 10l-2 2 2 2M16 10l2 2-2 2" /></Sv></Tool>
        </div>
      </div>
    </div>
  );
}
